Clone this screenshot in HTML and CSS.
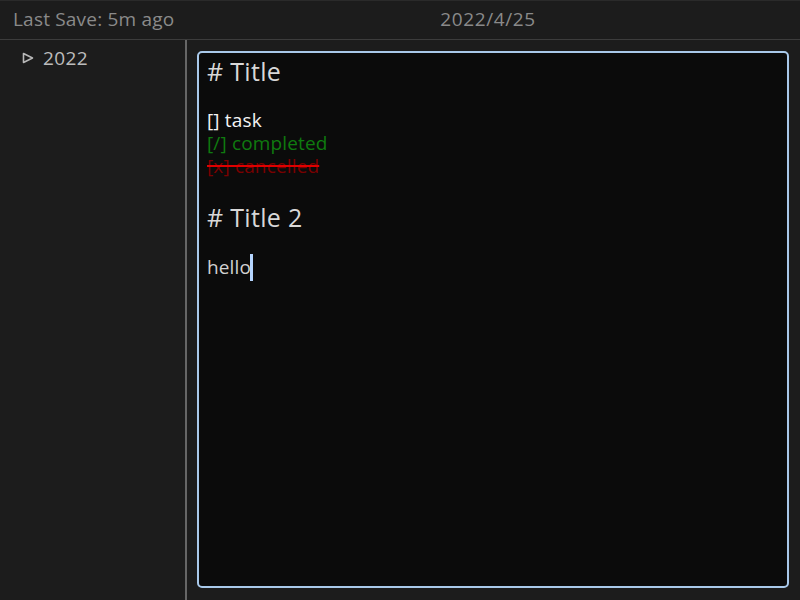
FILE: index.html
```html
<!DOCTYPE html>
<html>
<head>
<meta charset="utf-8">
<link rel="stylesheet" href="styles.css">
</head>
<body>
<div class="app">
  <header class="topbar">
    <div class="save">Last Save: 5m ago</div>
    <div class="date">2022/4/25</div>
  </header>
  <div class="main">
    <aside class="sidebar">
      <div class="tree-item">
        <svg class="tri" width="12" height="12" viewBox="0 0 12 12"><path d="M1.5 1.5 L10.5 6 L1.5 10.5 Z" fill="none" stroke="#b8b8b8" stroke-width="1.6" stroke-linejoin="round"/></svg>
        <span>2022</span>
      </div>
    </aside>
    <section class="editor-wrap">
      <div class="editor">
        <div class="h1">#&nbsp;Title</div>
        <div class="blank first"></div>
        <div class="line task">[] task</div>
        <div class="line done">[/] completed</div>
        <div class="line cancel"><span class="strike">[x] cancelled</span></div>
        <div class="blank"></div>
        <div class="h1 h1b">#&nbsp;Title 2</div>
        <div class="blank"></div>
        <div class="line text">hello<span class="cursor"></span></div>
      </div>
    </section>
  </div>
</div>
</body>
</html>
```

FILE: styles.css
```css
html, body {
  margin: 0;
  padding: 0;
  height: 100%;
  background: #1c1c1c;
  font-family: "Open Sans", "Noto Sans", sans-serif;
  font-weight: 400;
}
.app {
  display: flex;
  flex-direction: column;
  height: 600px;
  width: 800px;
}
.topbar {
  height: 35px;
  padding-bottom: 3px;
  border-top: 1px solid #2a2a2a;
  border-bottom: 1px solid #3c3c3c;
  display: grid;
  grid-template-columns: 188px 1fr;
  align-items: center;
  color: #8a8a8a;
  font-size: 19px;
  letter-spacing: 0.2px;
  background: #1c1c1c;
}
.save {
  padding-left: 13px;
  white-space: nowrap;
}
.date {
  text-align: center;
  padding-right: 12px;
  letter-spacing: 0.6px;
}
.main {
  flex: 1;
  display: flex;
  min-height: 0;
}
.sidebar {
  width: 185px;
  border-right: 2px solid #666666;
  background: #1c1c1c;
  padding-top: 7px;
}
.tree-item {
  display: flex;
  align-items: center;
  gap: 9px;
  padding-left: 22px;
  color: #bcbcbc;
  font-size: 19px;
  line-height: 22px;
  letter-spacing: 0.4px;
}
.tri {
  display: block;
}
.editor-wrap {
  flex: 1;
  padding: 11px 11px 12px 10px;
  display: flex;
}
.editor {
  flex: 1;
  border: 2px solid #a9c9ea;
  border-radius: 5px;
  background: #0b0b0b;
  padding: 4px 8px;
}
.h1 {
  font-size: 25px;
  line-height: 28px;
  color: #d8d8d8;
  letter-spacing: 0.3px;
}
.h1b {
  margin-top: 2px;
}
.blank {
  height: 23px;
}
.blank.first {
  height: 24px;
}
.line {
  font-size: 19px;
  line-height: 23px;
  letter-spacing: 0.15px;
}
.task { color: #f4f4f4; }
.done { color: #0f7a0f; }
.cancel { color: #7a0000; }
.strike {
  text-decoration: line-through;
  text-decoration-color: #e00000;
  text-decoration-thickness: 2px;
}
.text { color: #d2d2d2; }
.cursor {
  display: inline-block;
  width: 3px;
  height: 27px;
  background: #b5d5ff;
  vertical-align: -7px;
  margin-left: -1px;
}
```
